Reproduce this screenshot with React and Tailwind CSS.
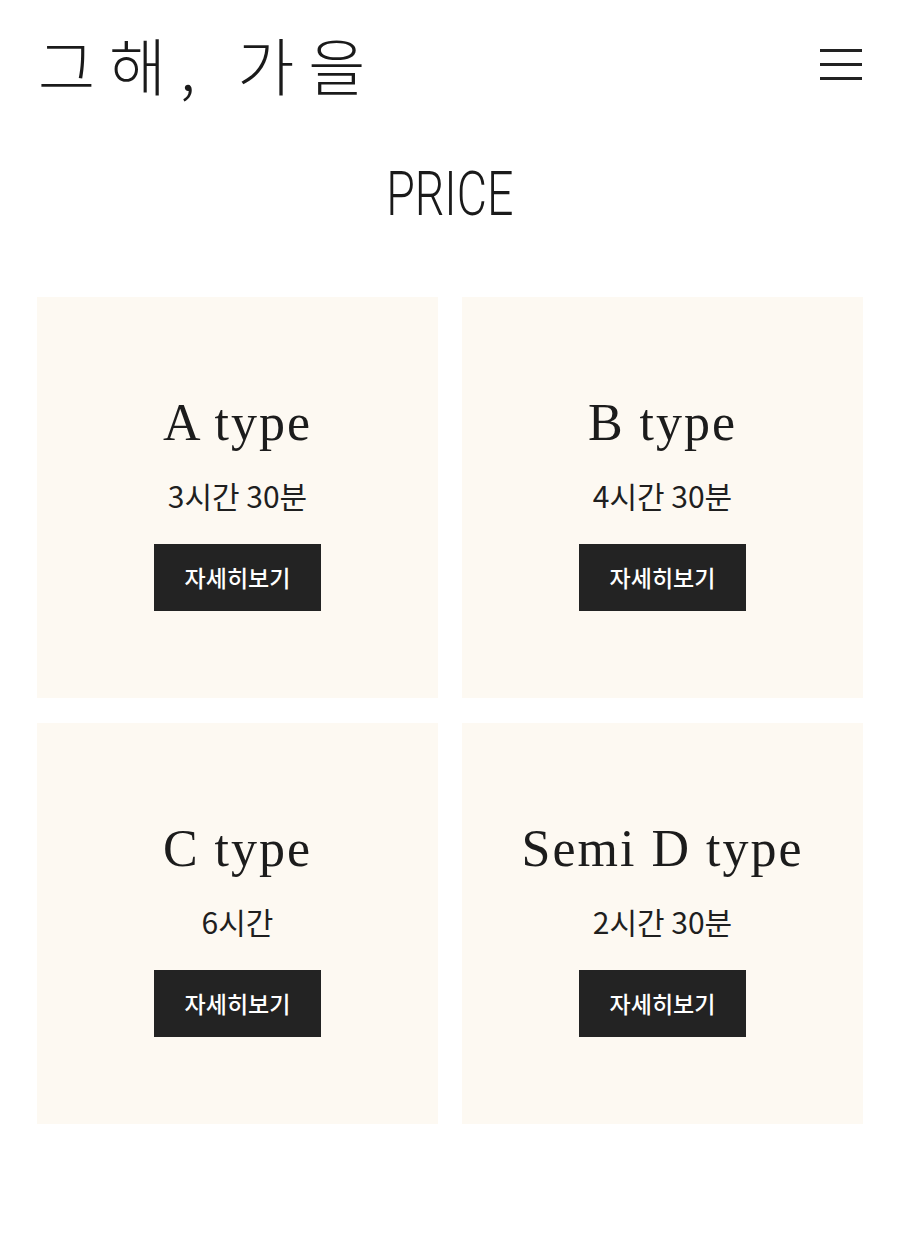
import React from "react";

const plans = [
  { name: "A type", time: "3시간 30분" },
  { name: "B type", time: "4시간 30분" },
  { name: "C type", time: "6시간" },
  { name: "Semi D type", time: "2시간 30분" },
];

const PriceCard = ({ name, time }) => {
  return (
    <div className="h-[401px] bg-[#fdf9f2] flex flex-col items-center pt-[96px]">
      <h3 className="font-['Liberation_Serif',serif] text-[52px] leading-[60px] tracking-[2px] text-[#1c1c1c]">
        {name}
      </h3>
      <p className="mt-[22px] font-['Noto_Sans_CJK_KR',sans-serif] text-[30px] leading-[40px] text-[#1f1f1f]">
        {time}
      </p>
      <button
        type="button"
        className="mt-[29px] w-[167px] h-[67px] bg-[#232323] text-white font-['Noto_Sans_CJK_KR',sans-serif] text-[23px] font-medium"
      >
        자세히보기
      </button>
    </div>
  );
};

const App = () => {
  return (
    <div className="min-h-[1256px] bg-white px-[37px]">
      <header className="h-[128px] flex items-center justify-between">
        <h1 className="font-['Noto_Sans_CJK_KR',serif] text-[62px] leading-none font-light tracking-[14px] text-[#1a1a1a] pl-[1px]">
          그해, 가을
        </h1>
        <button type="button" className="flex flex-col gap-[11px] mr-[1px]">
          <span className="block w-[42px] h-[3px] bg-[#222]" />
          <span className="block w-[42px] h-[3px] bg-[#222]" />
          <span className="block w-[42px] h-[3px] bg-[#222]" />
        </button>
      </header>

      <section className="mt-[36px]">
        <h2 className="text-center h-[60px] leading-[60px]">
          <span className="inline-block scale-x-75 font-['Roboto',sans-serif] font-light text-[62px] text-[#1a1a1a]">
            PRICE
          </span>
        </h2>
        <div className="mt-[73px] grid grid-cols-2 gap-x-[24px] gap-y-[25px]">
          {plans.map((plan) => (
            <PriceCard key={plan.name} {...plan} />
          ))}
        </div>
      </section>
    </div>
  );
};

export default App;
